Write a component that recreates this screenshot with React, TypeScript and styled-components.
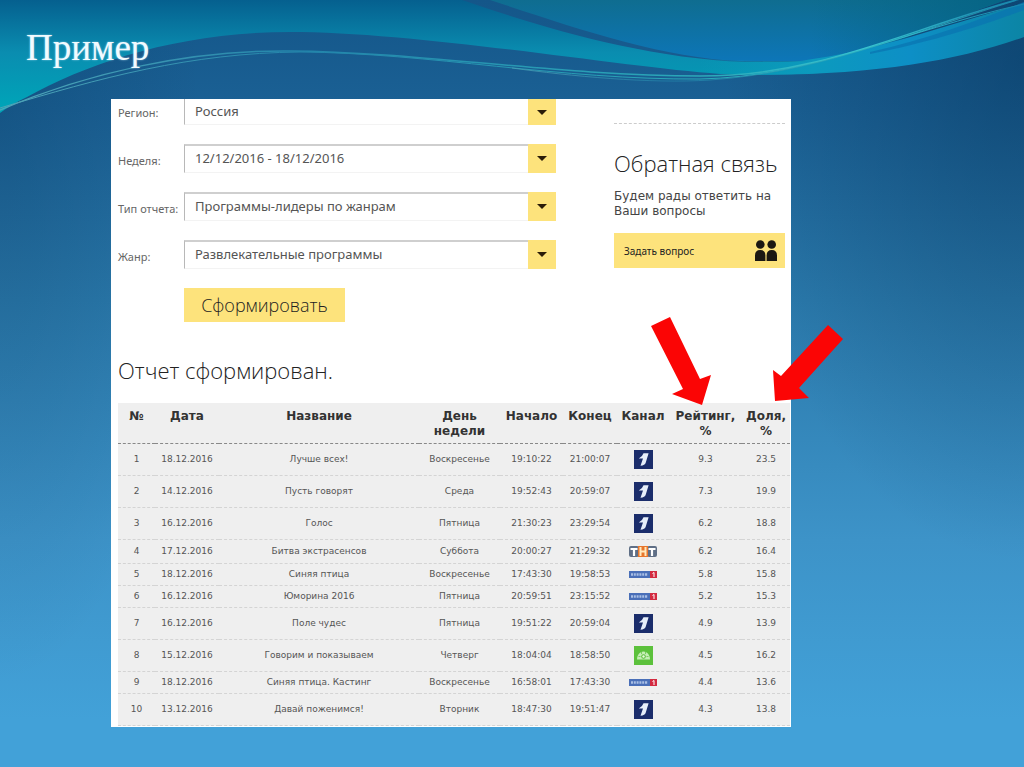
import React from 'react';
import styled, { createGlobalStyle } from 'styled-components';

const GlobalStyle = createGlobalStyle`
  * { box-sizing: border-box; }
  body { margin: 0; }
`;

const uiFont = `'Noto Sans', 'Open Sans', sans-serif`;
const tableFont = `'DejaVu Sans', Verdana, sans-serif`;

const Slide = styled.main`
  position: relative;
  isolation: isolate;
  overflow: hidden;
  min-height: 100vh;
  padding: 0 233px 41px 111px;
  background:
    radial-gradient(ellipse 300px 500px at 100% 8%, rgba(0, 40, 75, 0.38), rgba(0, 40, 75, 0)),
    radial-gradient(ellipse 200px 560px at 0% 16%, rgba(0, 40, 75, 0.22), rgba(0, 40, 75, 0)),
    linear-gradient(180deg, #145689 0, #1b6195 110px, #2a79ab 300px, #3d93c8 540px, #42a1d8 720px);
  font-family: ${uiFont};
  color: #444;
`;

const Waves = styled.svg`
  position: absolute;
  z-index: -1;
  top: 0;
  left: 0;
  width: 100%;
  height: 120px;
`;

const Title = styled.h1`
  margin: 0 0 0 -85px;
  height: 99px;
  padding-top: 28px;
  font: 400 37px/40px 'Liberation Serif', 'Times New Roman', serif;
  color: #f2fbff;
  text-shadow: 0 0 2px rgba(200, 240, 255, 0.7);
`;

const Panel = styled.section`
  position: relative;
  padding: 0 1px 1px 7px;
  background: #fff;
`;

const Top = styled.div`
  display: flex;
  justify-content: space-between;
  padding-right: 5px;
`;

const Form = styled.form`
  flex: 0 1 438px;
  display: flex;
  flex-direction: column;
  gap: 19px;
`;

const Field = styled.div<{ $cut?: boolean }>`
  display: flex;
  height: ${p => (p.$cut ? 26 : 29)}px;
`;

const Label = styled.label<{ $cut?: boolean }>`
  flex: 0 0 66px;
  padding-top: ${p => (p.$cut ? 6 : 9)}px;
  font-size: 11px;
  line-height: 16px;
  white-space: nowrap;
  color: #666;
`;

const SelectBox = styled.div<{ $cut?: boolean }>`
  position: relative;
  flex: 1;
  border: 1px solid #f3f3f3;
  border-top: ${p => (p.$cut ? '0' : '2px solid #cfcfcf')};
  border-left: 1px solid #b8b8b8;
  border-right: 0;
`;

const Select = styled.select`
  display: block;
  width: 100%;
  height: 100%;
  padding: 0 36px 2px 10px;
  border: 0;
  appearance: none;
  background: #fff;
  font: 13px/20px ${uiFont};
  color: #555;
`;

const Arrow = styled.span<{ $cut?: boolean }>`
  position: absolute;
  top: ${p => (p.$cut ? '0' : '-2px')};
  right: 0;
  bottom: -1px;
  display: grid;
  place-items: center;
  width: 28px;
  background: #fde37c;
  pointer-events: none;
`;

const Submit = styled.button`
  width: 161px;
  height: 34px;
  margin-left: 66px;
  padding: 0;
  border: 0;
  background: #fde37c;
  font: 300 18px/32px 'Open Sans', ${uiFont};
  color: #222;
`;

const Aside = styled.aside`
  flex: 0 0 171px;
`;

const Rule = styled.div`
  height: 25px;
  border-bottom: 1px dashed #ccc;
`;

const AsideTitle = styled.h2`
  margin: 25px 0 12px;
  font: 300 22px/28px 'Open Sans', ${uiFont};
  white-space: nowrap;
  color: #222;
`;

const AsideText = styled.p`
  margin: 0 0 14px;
  font: 12px/15px ${tableFont};
  white-space: nowrap;
`;

const Ask = styled.button`
  display: flex;
  align-items: center;
  justify-content: space-between;
  width: 100%;
  height: 35px;
  padding: 0 8px 0 10px;
  border: 0;
  background: #fde37c;
  font: 10px/16px ${uiFont};
  color: #222;
`;

const Status = styled.h2`
  margin: 32px 0 17px;
  font: 300 22px/32px 'Open Sans', ${uiFont};
  color: #222;
`;

const Table = styled.table`
  width: 100%;
  table-layout: fixed;
  border-collapse: collapse;
  background: #efefef;
  font-family: ${tableFont};
  text-align: center;
`;

const Col = styled.col<{ $w?: number }>`
  width: ${p => (p.$w ? `${p.$w}px` : 'auto')};
`;

const Th = styled.th`
  height: 40px;
  padding: 6px 0 3px;
  border-bottom: 1px dashed #888;
  vertical-align: top;
  font-size: 12px;
  line-height: 15px;
  color: #333;
`;

const Row = styled.tr<{ $h: number }>`
  height: ${p => p.$h}px;
`;

const Td = styled.td`
  padding: 0;
  border-bottom: 1px dashed #d4d4d4;
  font-size: 9px;
  line-height: 12px;
  color: #555;
  white-space: nowrap;

  svg { display: block; margin: 0 auto; }
`;

const Arrows = styled.svg`
  position: absolute;
  top: 216px;
  right: -54px;
  width: 196px;
  height: 92px;
  pointer-events: none;
`;

type Channel = 'one' | 'tnt' | 'russia' | 'ntv';

const ChannelLogo = ({ name }: { name: Channel }) => {
  if (name === 'one')
    return (
      <svg width="19" height="19" viewBox="0 0 19 19" role="img" aria-label="Первый канал">
        <rect width="19" height="19" fill="#1b2d6b" />
        <path d="M9.500 3.300H14.600L11.700 12.800Q10.900 15.500 6.500 15.700L9 8.600H4.800Q8.300 7 9.500 3.300Z" fill="#e6eefa" />
      </svg>
    );
  if (name === 'ntv')
    return (
      <svg width="19" height="19" viewBox="0 0 19 19" role="img" aria-label="НТВ">
        <rect width="19" height="19" fill="#5cc13c" />
        <path d="M3 13.500c0-4 2.500-8 6.500-8s6.500 4 6.500 8Z" fill="#c4edb4" />
        <path d="M7.500 6v2M11.500 6v2M4.500 10.500h2M12.500 10.500h2" stroke="#5cc13c" strokeWidth=".7" />
        <circle cx="9.500" cy="10.500" r="2.300" fill="#5cc13c" />
        <circle cx="9.500" cy="10.500" r="1.200" fill="#eafbe2" />
      </svg>
    );
  if (name === 'tnt')
    return (
      <svg width="28" height="11" viewBox="0 0 28 11" role="img" aria-label="ТНТ">
        <rect width="10" height="11" rx="2" fill="#5f6f86" />
        <rect x="18" width="10" height="11" rx="2" fill="#5f6f86" />
        <rect x="9" width="10" height="11" fill="#e8762c" />
        <path d="M1.500 3h7M5 3v7M19.500 3h7M23 3v7" stroke="#fff" strokeWidth="2.200" />
        <path d="M11.500 1v9M16.500 1v9M11.500 5.500h5" stroke="#ffe9bd" strokeWidth="2" />
      </svg>
    );
  return (
    <svg width="28" height="7" viewBox="0 0 28 7" role="img" aria-label="Россия 1">
      <rect width="21" height="7" fill="#4a6fb8" />
      <rect x="21" width="7" height="7" fill="#d32a40" />
      <path d="M2 3.500h17" stroke="#a9bfe4" strokeWidth="2.500" strokeDasharray="2 .8" />
      <path d="M23.500 2.500l1.500-1v4.500" stroke="#fff" fill="none" />
    </svg>
  );
};

const fields = [
  ['region', 'Регион:', 'Россия'],
  ['week', 'Неделя:', '12/12/2016 - 18/12/2016'],
  ['type', 'Тип отчета:', 'Программы-лидеры по жанрам'],
  ['genre', 'Жанр:', 'Развлекательные программы'],
];

const columns: [string, number, string?][] = [
  ['№', 37],
  ['Дата', 64],
  ['Название', 0],
  ['День', 81, 'недели'],
  ['Начало', 63],
  ['Конец', 54],
  ['Канал', 52],
  ['Рейтинг,', 73, '%'],
  ['Доля,', 48, '%'],
];

const rows: [string, string, string, string, string, Channel, string, string][] = [
  ['18.12.2016', 'Лучше всех!', 'Воскресенье', '19:10:22', '21:00:07', 'one', '9.3', '23.5'],
  ['14.12.2016', 'Пусть говорят', 'Среда', '19:52:43', '20:59:07', 'one', '7.3', '19.9'],
  ['16.12.2016', 'Голос', 'Пятница', '21:30:23', '23:29:54', 'one', '6.2', '18.8'],
  ['17.12.2016', 'Битва экстрасенсов', 'Суббота', '20:00:27', '21:29:32', 'tnt', '6.2', '16.4'],
  ['18.12.2016', 'Синяя птица', 'Воскресенье', '17:43:30', '19:58:53', 'russia', '5.8', '15.8'],
  ['16.12.2016', 'Юморина 2016', 'Пятница', '20:59:51', '23:15:52', 'russia', '5.2', '15.3'],
  ['16.12.2016', 'Поле чудес', 'Пятница', '19:51:22', '20:59:04', 'one', '4.9', '13.9'],
  ['15.12.2016', 'Говорим и показываем', 'Четверг', '18:04:04', '18:58:50', 'ntv', '4.5', '16.2'],
  ['18.12.2016', 'Синяя птица. Кастинг', 'Воскресенье', '16:58:01', '17:43:30', 'russia', '4.4', '13.6'],
  ['13.12.2016', 'Давай поженимся!', 'Вторник', '18:47:30', '19:51:47', 'one', '4.3', '13.8'],
];

const rowHeight: Record<Channel, number> = { one: 32, ntv: 32, tnt: 24, russia: 22 };

export default function App() {
  return (
    <Slide>
      <GlobalStyle />
      <Waves viewBox="0 0 1024 120" preserveAspectRatio="none" aria-hidden="true">
        <defs>
          <linearGradient id="band" gradientUnits="userSpaceOnUse" x1="0" y1="0" x2="0" y2="105">
            <stop offset="0" stopColor="#05608f" />
            <stop offset=".5" stopColor="#0a8db0" />
            <stop offset="1" stopColor="#00a3b8" />
          </linearGradient>
          <linearGradient id="cap" x1="0" y1="0" x2="0" y2="1">
            <stop offset="0" stopColor="#0f6c8c" />
            <stop offset="1" stopColor="#0d76b8" />
          </linearGradient>
          <linearGradient id="capShade" x1="0" y1="0" x2="1" y2="0">
            <stop offset=".6" stopColor="#056484" stopOpacity="0" />
            <stop offset="1" stopColor="#056484" />
          </linearGradient>
          <linearGradient id="right" x1="0" y1="0" x2="1" y2="0">
            <stop offset="0" stopColor="#0a9cba" stopOpacity="0" />
            <stop offset=".35" stopColor="#0c9abe" />
            <stop offset=".65" stopColor="#0d8fc6" />
            <stop offset="1" stopColor="#0c85a5" />
          </linearGradient>
          <linearGradient id="line" x1="0" y1="0" x2="1" y2="0">
            <stop offset="0" stopColor="#4fa5b8" />
            <stop offset=".3" stopColor="#2385ab" />
            <stop offset=".7" stopColor="#2ba9b9" />
            <stop offset=".85" stopColor="#38c4d0" />
            <stop offset="1" stopColor="#1785ac" />
          </linearGradient>
        </defs>
        <path d="M0 0H462C535 25 640 58 745 62H820V73Q770 76 720 74C620 67 420 32 290 32C180 32 90 62 27 97Q12 104 0 113Z" fill="url(#band)" />
        <path d="M490 0C570 26 660 58 740 61H800C870 61 940 20 1024 -6Z" fill="url(#cap)" />
        <path d="M490 0C570 26 660 58 740 61H800C870 61 940 20 1024 -6Z" fill="url(#capShade)" />
        <path d="M700 58Q740 62 800 61C880 50 950 24 1024 3V37C960 60 880 74 770 75Q740 75 700 71Z" fill="url(#right)" />
        <path d="M870 52C930 38 980 20 1024 2V10C960 34 910 46 870 54Z" fill="#0a74b0" opacity=".7" />
        <g fill="none" stroke="url(#line)">
          <path d="M0 110C90 72 190 50 290 51C420 52 560 76 700 76C820 76 900 32 1016 0" strokeWidth="1.500" />
          <path d="M0 108C100 78 190 53 300 52C430 53 560 80 700 79C810 77 900 32 1024 4" />
          <path d="M512 68C570 76 650 84 710 80C820 72 900 36 1024 -2" opacity=".7" />
        </g>
      </Waves>
      <Title>Пример</Title>
      <Panel>
        <Top>
          <Form onSubmit={e => e.preventDefault()}>
            {fields.map(([id, label, value], i) => (
              <Field key={id} $cut={i === 0}>
                <Label htmlFor={id} $cut={i === 0}>{label}</Label>
                <SelectBox $cut={i === 0}>
                  <Select id={id}>
                    <option>{value}</option>
                  </Select>
                  <Arrow $cut={i === 0}>
                    <svg width="10" height="5" viewBox="0 0 10 5" aria-hidden="true">
                      <path d="M0 0H10L5 5Z" fill="#2b1d08" />
                    </svg>
                  </Arrow>
                </SelectBox>
              </Field>
            ))}
            <Submit>Сформировать</Submit>
          </Form>
          <Aside>
            <Rule />
            <AsideTitle>Обратная связь</AsideTitle>
            <AsideText>
              Будем рады ответить на
              <br />
              Ваши вопросы
            </AsideText>
            <Ask type="button">
              Задать вопрос
              <svg width="22" height="21" viewBox="0 0 22 21" fill="#1c1812" aria-hidden="true">
                <circle cx="5.300" cy="4.500" r="4.300" />
                <circle cx="16.700" cy="4.500" r="4.300" />
                <path d="M0 21v-5.500Q0 10 5.200 10t5.200 5.500V21ZM11.600 21v-5.500Q11.600 10 16.800 10t5.200 5.500V21Z" />
              </svg>
            </Ask>
          </Aside>
        </Top>
        <Status>Отчет сформирован.</Status>
        <Table>
          <colgroup>
            {columns.map(([name, width]) => (
              <Col key={name} $w={width} />
            ))}
          </colgroup>
          <thead>
            <tr>
              {columns.map(([name, , second]) => (
                <Th key={name} scope="col">
                  {name}
                  {second && <br />}
                  {second}
                </Th>
              ))}
            </tr>
          </thead>
          <tbody>
            {rows.map(([date, name, day, start, end, channel, rating, share], i) => (
              <Row key={i} $h={rowHeight[channel]}>
                <Td>{i + 1}</Td>
                <Td>{date}</Td>
                <Td>{name}</Td>
                <Td>{day}</Td>
                <Td>{start}</Td>
                <Td>{end}</Td>
                <Td><ChannelLogo name={channel} /></Td>
                <Td>{rating}</Td>
                <Td>{share}</Td>
              </Row>
            ))}
          </tbody>
        </Table>
        <Arrows viewBox="0 0 196 92" fill="#fb0505" aria-hidden="true">
          <path d="M2 11L21 2L51 64L62 60L53 90L23 79L34 74Z" />
          <path d="M179 10L194 24L150 73L160 83L126 86L124 55L132 61Z" />
        </Arrows>
      </Panel>
    </Slide>
  );
}
